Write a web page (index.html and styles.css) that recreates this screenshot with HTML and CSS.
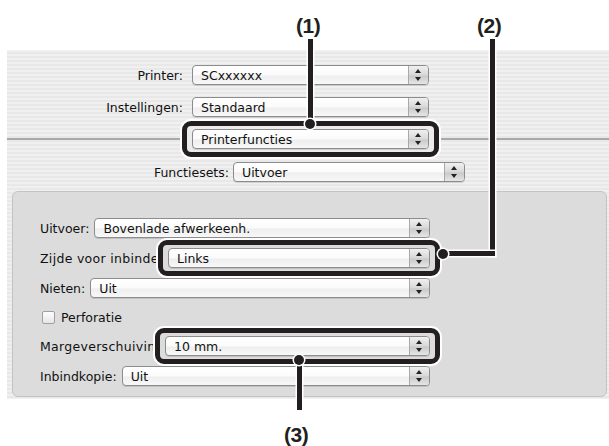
FILE: index.html
```html
<!DOCTYPE html>
<html lang="nl">
	<head>
		<meta charset="UTF-8">
		<meta name="viewport" content="width=device-width, initial-scale=1.0">
		<title>Printerfuncties - Uitvoer</title>
		<link rel="stylesheet" href="styles.css">
	</head>
	<body>
	<div class="page">
		<div class="sheet">
			<div class="top">
				<div class="row">
					<span class="lbl">Printer:</span>
					<div class="popup">SCxxxxxx<span class="arrows"></span></div>
				</div>
				<div class="row">
					<span class="lbl">Instellingen:</span>
					<div class="popup">Standaard<span class="arrows"></span></div>
				</div>
				<div class="row row-sep">
					<span class="lbl"></span>
					<div class="frame frame-top">
						<div class="popup">Printerfuncties<span class="arrows"></span></div>
					</div>
				</div>
				<div class="row row-sets">
					<span class="lbl">Functiesets:</span>
					<div class="popup">Uitvoer<span class="arrows"></span></div>
				</div>
			</div>

			<div class="panel">
				<div class="prow">
					<span class="plbl">Uitvoer:</span>
					<div class="popup">Bovenlade afwerkeenh.<span class="arrows"></span></div>
				</div>
				<div class="prow">
					<span class="plbl clip clip-zijde">Zijde voor inbinden:</span>
					<div class="frame">
						<div class="popup">Links<span class="arrows"></span></div>
					</div>
				</div>
				<div class="prow">
					<span class="plbl">Nieten:</span>
					<div class="popup">Uit<span class="arrows"></span></div>
				</div>
				<div class="prow prow-check">
					<span class="checkbox"></span>
					<span class="plbl">Perforatie</span>
				</div>
				<div class="prow">
					<span class="plbl clip clip-marge">Margeverschuiving:</span>
					<div class="frame">
						<div class="popup">10 mm.<span class="arrows"></span></div>
					</div>
				</div>
				<div class="prow">
					<span class="plbl">Inbindkopie:</span>
					<div class="popup">Uit<span class="arrows"></span></div>
				</div>
			</div>
		</div>

		<!-- callout annotations -->
		<div class="num num1">(1)</div>
		<div class="line line1"></div>
		<div class="dot dot1"></div>

		<div class="num num2">(2)</div>
		<div class="line line2v"></div>
		<div class="line line2h"></div>
		<div class="dot dot2"></div>

		<div class="line line3"></div>
		<div class="dot dot3"></div>
		<div class="num num3">(3)</div>
	</div>
	</body>
</html>
```

FILE: styles.css
```css
body {
	margin: 0;
	background: #fff;
	font-family: 'DejaVu Sans', Verdana, sans-serif;
	font-size: 12.5px;
	color: #111;
}
.page {
	position: relative;
	width: 609px;
	height: 446px;
	overflow: hidden;
}
.sheet {
	margin: 50px 0 0 7px;
	padding-bottom: 2px;
	background: repeating-linear-gradient(#f0f0f0 0, #f0f0f0 2px, #e8e8e8 2px, #e8e8e8 4px);
}
.top {
	padding-top: 15px;
	display: flex;
	flex-direction: column;
	gap: 12px;
}
.row {
	display: flex;
	align-items: center;
	height: 20px;
}
.row .lbl {
	width: 176px;
	margin-right: 9px;
	text-align: right;
	white-space: nowrap;
}
.row .popup {
	width: 237px;
}
.row-sep {
	background: linear-gradient(to bottom, transparent 9px, #a9a9a9 9px, #a9a9a9 11px, transparent 11px);
}
.row-sets {
	margin-top: 1px;
}
.row-sets .lbl {
	width: 222px;
	margin-right: 4px;
}
.row-sets .popup {
	width: 232px;
}

/* popup button */
.popup {
	box-sizing: border-box;
	height: 20px;
	border: 1px solid #8c8c8c;
	border-radius: 4px;
	background: linear-gradient(#ffffff, #fbfbfb 50%, #eeeeee 55%, #f8f8f8);
	display: flex;
	align-items: center;
	padding-left: 8px;
	white-space: nowrap;
	box-shadow: 0 1px 0 rgba(0, 0, 0, .12);
}
.arrows {
	margin-left: auto;
	width: 20px;
	height: 100%;
	box-sizing: border-box;
	border-left: 1px solid #a9a9a9;
	border-radius: 0 3px 3px 0;
	background: linear-gradient(#f0f0f0, #d8d8d8 50%, #c9c9c9 55%, #e6e6e6);
	position: relative;
}
.arrows::before,
.arrows::after {
	content: '';
	position: absolute;
	left: 6px;
	border-left: 3px solid transparent;
	border-right: 3px solid transparent;
}
.arrows::before {
	top: 3px;
	border-bottom: 4px solid #222;
}
.arrows::after {
	bottom: 3px;
	border-top: 4px solid #222;
}

/* callout frame around a popup */
.frame {
	position: relative;
	z-index: 1;
	border: 5px solid #231f20;
	border-radius: 9px;
	padding: 3px 5px;
	margin: -8px -10px;
	background: #dcdcdc;
	box-shadow: 0 0 0 2px #fff;
}
.frame-top {
	background: #ececec;
}

/* options panel */
.panel {
	margin: 9px 2px 0 5px;
	height: 206px;
	box-sizing: border-box;
	background: #dcdcdc;
	border: 1px solid #c3c3c3;
	border-radius: 6px;
	padding: 26px 176px 0 27px;
	display: flex;
	flex-direction: column;
	gap: 10px;
}
.prow {
	display: flex;
	align-items: center;
	height: 20px;
}
.prow .popup {
	flex: 1;
}
.prow .frame {
	flex: 1;
}
.plbl {
	margin-right: 5px;
	white-space: nowrap;
}
.plbl.clip {
	overflow: hidden;
	margin-right: 0;
	letter-spacing: 0.3px;
}
.clip-zijde {
	width: 128px;
}
.clip-marge {
	width: 125px;
}
.prow-check {
	height: 18px;
}
.checkbox {
	width: 11px;
	height: 11px;
	margin: 0 6px 0 2px;
	border: 1px solid #a0a0a0;
	border-radius: 2px;
	background: linear-gradient(#fdfdfd, #e6e6e6);
}

/* numbers and leader lines */
.num {
	position: absolute;
	font-family: 'Liberation Sans', Arial, sans-serif;
	font-weight: bold;
	font-size: 21px;
	line-height: 20px;
	color: #231f20;
	letter-spacing: -0.5px;
}
.num1 { left: 296px; top: 16px; }
.num2 { left: 477px; top: 16px; }
.num3 { left: 284px; top: 425px; }
.line {
	position: absolute;
	background: #231f20;
	box-shadow: 0 0 0 1.5px #fff;
	z-index: 2;
}
.line1 { left: 308px; top: 39px; width: 5px; height: 84px; }
.line2v { left: 490px; top: 39px; width: 5px; height: 217px; }
.line2h { left: 445px; top: 251px; width: 50px; height: 5px; }
.line3 { left: 297px; top: 362px; width: 5px; height: 48px; }
.dot {
	position: absolute;
	width: 10px;
	height: 10px;
	border-radius: 50%;
	background: #231f20;
	box-shadow: 0 0 0 1.5px #fff;
	z-index: 3;
}
.dot1 { left: 305px; top: 119px; }
.dot2 { left: 438px; top: 249px; }
.dot3 { left: 294px; top: 355px; }
```
